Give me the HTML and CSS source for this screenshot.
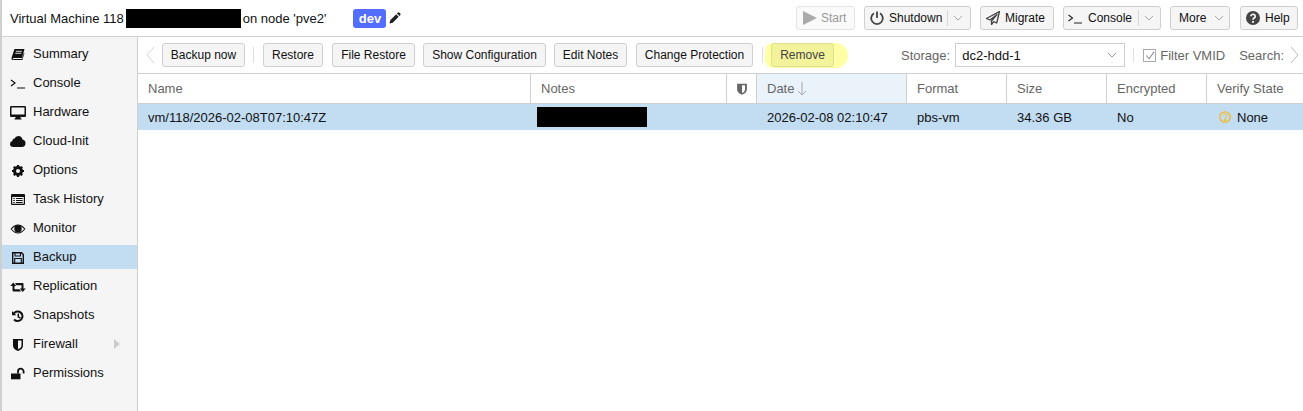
FILE: index.html
```html
<!DOCTYPE html>
<html lang="en">
<head>
<meta charset="utf-8">
<title>Virtual Machine 118</title>
<link rel="stylesheet" href="styles.css">
</head>
<body>
<div class="app">
  <header class="topbar">
    <div class="title">
      <span>Virtual Machine 118</span><span class="redact-title"></span><span>on node 'pve2'</span>
      <span class="tag">dev</span>
      <svg class="pencil" viewBox="0 0 12 12"><path d="M0.5 11.5l0.7-3.2 6-6 2.5 2.5-6 6zM8 1.6l1-1q.6-.5 1.2 0l1.2 1.2q.5.6 0 1.2l-1 1z" fill="#222"/></svg>
    </div>
    <div class="actions">
      <button class="btn disabled w-start"><svg class="bi" viewBox="0 0 14 14"><path d="M0 0l14 7-14 7z" fill="#aaa"/></svg>Start</button>
      <button class="btn w-shut"><svg class="bi" viewBox="0 0 14 14"><path d="M4 2.300a5.800 5.800 0 1 0 6 0M7 .5v6.500" fill="none" stroke="#444" stroke-width="1.800"/></svg>Shutdown<span class="split"></span><svg class="chev" viewBox="0 0 10 6"><path d="M1 1l4 4 4-4" fill="none" stroke="#aaa"/></svg></button>
      <button class="btn w-mig"><svg class="bi" viewBox="0 0 14 14"><path d="M13.500.5L.5 7.500l3.500 1.500L11 3.500 5.500 10v3.500l2.200-2.800 3 1.300z" fill="none" stroke="#444" stroke-width="1.300" stroke-linejoin="round"/></svg>Migrate</button>
      <button class="btn w-con"><svg class="bi" viewBox="0 0 14 14"><path d="M.5 4l4 3-4 3M6 12h8" fill="none" stroke="#222" stroke-width="1.100"/></svg>Console<span class="split split-con"></span><svg class="chev" viewBox="0 0 10 6"><path d="M1 1l4 4 4-4" fill="none" stroke="#aaa"/></svg></button>
      <button class="btn w-more">More<svg class="chev more-chev" viewBox="0 0 10 6"><path d="M1 1l4 4 4-4" fill="none" stroke="#aaa"/></svg></button>
      <button class="btn w-help"><svg class="bi" viewBox="0 0 14 14"><circle cx="7" cy="7" r="7" fill="#444"/><path d="M4.800 5.300a2.200 2 0 1 1 3.400 1.700Q7 7.700 7 8.800" fill="none" stroke="#fff" stroke-width="1.600"/><rect x="6.100" y="10" width="1.800" height="1.800" fill="#fff"/></svg>Help</button>
    </div>
  </header>
  <div class="main">
    <nav class="sidebar">
      <a class="nav"><svg class="ni" viewBox="0 0 16 16"><path d="M4.500 3H14.500L12 12H3.800Q2.600 12 2.900 12.800T3.800 13H12L14 6.500l.4.700-2 6.800H3.200Q1 14 1.600 11.500z" fill="#111"/><path d="M5.800 5.300h6M5.300 7.300h6" stroke="#f5f5f5" stroke-width=".9"/></svg>Summary</a>
      <a class="nav"><svg class="ni" viewBox="0 0 16 16"><path d="M1 5l4 3-4 3M7 13h8" fill="none" stroke="#111" stroke-width="1.200"/></svg>Console</a>
      <a class="nav"><svg class="ni" viewBox="0 0 16 16"><path d="M1.200 2h13.600q1.200 0 1.200 1.200v8.600q0 1.200-1.200 1.200H10.500v1l1 .8v.6h-7v-.6l1-.8v-1H1.200Q0 13 0 11.800V3.200Q0 2 1.200 2zM1.500 3.500v7h13v-7z" fill="#111" fill-rule="evenodd"/></svg>Hardware</a>
      <a class="nav"><svg class="ni" viewBox="0 0 16 16"><path d="M3.500 14Q0 14 0 11 0 8.700 2.300 8 2.200 5.800 4.500 5.500 5.500 3 8.500 3q3.300 0 4 3.500 3 .6 3 3.700 0 3.800-3.700 3.800z" fill="#111"/></svg>Cloud-Init</a>
      <a class="nav"><svg class="ni" viewBox="0 0 16 16"><circle cx="8" cy="9" r="3.700" fill="none" stroke="#111" stroke-width="2.800"/><path d="M8 3v12M2 9h12M3.800 4.800l8.400 8.400M12.200 4.800l-8.400 8.400" stroke="#111" stroke-width="2.200"/><circle cx="8" cy="9" r="2" fill="#f5f5f5"/></svg>Options</a>
      <a class="nav"><svg class="ni" viewBox="0 0 16 16"><path d="M2 3h12q1 0 1 1v9q0 1-1 1H2q-1 0-1-1V4q0-1 1-1zM2.200 6v6.800h11.600V6z" fill="#111" fill-rule="evenodd"/><path d="M3.300 7.500h1.500M3.300 9.500h1.500M3.300 11.500h1.500M6 7.500h6.700M6 9.500h6.700M6 11.500h6.700" stroke="#111"/></svg>Task History</a>
      <a class="nav"><svg class="ni" viewBox="0 0 16 16"><path d="M1.200 9Q4.500 5 8 5t6.800 4Q11.500 13 8 13T1.200 9z" fill="none" stroke="#111" stroke-width="1.100"/><circle cx="8" cy="8.700" r="3.700" fill="#111"/></svg>Monitor</a>
      <a class="nav active"><svg class="ni" viewBox="0 0 16 16"><path d="M3 3.700h8.500L13.300 5.500V14.300H2.700V3.700z" fill="none" stroke="#111" stroke-width="1.400"/><path d="M5 4v3h5.500V4M4.700 14v-4.500h6.600V14" fill="none" stroke="#111" stroke-width="1.100"/></svg>Backup</a>
      <a class="nav"><svg class="ni" viewBox="0 0 16 16"><path d="M.3 8L3.300 4.500l3 3.500H4.500v3.200h5L11 13.500H3.500q-1 0-1-1V8zM15.700 10.500l-3 3.500-3-3.500h1.800V7.300h-5L5 5h7.500q1 0 1 1v4.500z" fill="#111"/></svg>Replication</a>
      <a class="nav"><svg class="ni" viewBox="0 0 16 16"><path d="M3.800 6.500a4.800 4.800 0 1 1 .3 6" fill="none" stroke="#111" stroke-width="2"/><path d="M2 4v4.300h4.300z" fill="#111"/><path d="M8.300 6.500v3.300l2.200 1.300" fill="none" stroke="#111" stroke-width="1.500"/></svg>Snapshots</a>
      <a class="nav nav-fw"><svg class="ni" viewBox="0 0 16 16"><path d="M3 3h10v6.500q0 3.500-5 5.500-5-2-5-5.500zM8 4.500v8.700q3.500-1.500 3.500-3.700v-5z" fill="#111" fill-rule="evenodd"/></svg>Firewall<svg class="expander" viewBox="0 0 6 10"><path d="M0 0l6 5-6 5z" fill="#ccc"/></svg></a>
      <a class="nav"><svg class="ni" viewBox="0 0 16 16"><path d="M1 8.500h9.500v5.800H1z" fill="#111"/><path d="M8 8.500V6.500a2.800 2.800 0 0 1 5.600 0v2" fill="none" stroke="#111" stroke-width="1.800"/></svg>Permissions</a>
    </nav>
    <section class="content">
      <div class="toolbar">
        <svg class="scroll" viewBox="0 0 9 18"><path d="M8 1L1 9l7 8" fill="none" stroke="#d4d4d4"/></svg>
        <button class="btn b1">Backup now</button>
        <span class="sep s1"></span>
        <button class="btn b2">Restore</button>
        <button class="btn b3">File Restore</button>
        <button class="btn b4">Show Configuration</button>
        <button class="btn b5">Edit Notes</button>
        <button class="btn b6">Change Protection</button>
        <span class="sep s2"></span>
        <span class="hilite"><button class="btn btn-remove">Remove</button></span>
        <span class="spacer"></span>
        <label class="lbl">Storage:</label>
        <div class="combo"><span>dc2-hdd-1</span><svg class="chev" viewBox="0 0 10 6"><path d="M1 1l4 4 4-4" fill="none" stroke="#999"/></svg></div>
        <span class="sep s3"></span>
        <span class="check"><svg viewBox="0 0 12 12"><path d="M2.500 6l3 3.500L11 2" fill="none" stroke="#888" stroke-width="1.100"/></svg></span>
        <span class="lbl filter">Filter VMID</span>
        <span class="lbl search">Search:</span>
        <svg class="scroll scroll-r" viewBox="0 0 9 18"><path d="M1 1l7 8-7 8" fill="none" stroke="#bbb"/></svg>
      </div>
      <div class="grid">
        <div class="th">Name</div>
        <div class="th">Notes</div>
        <div class="th th-icon"><svg viewBox="0 0 16 16"><path d="M1.500 1h13v7.500q0 4.500-6.500 7-6.500-2.500-6.500-7zM8 3v10.300q4-1.800 4-4.800V3z" fill="#666" fill-rule="evenodd"/></svg></div>
        <div class="th th-sort">Date<svg class="arrow" viewBox="0 0 10 14"><path d="M5 0v13M1 9l4 4 4-4" fill="none" stroke="#aaa"/></svg></div>
        <div class="th">Format</div>
        <div class="th">Size</div>
        <div class="th">Encrypted</div>
        <div class="th th-last">Verify State</div>
        <div class="td">vm/118/2026-02-08T07:10:47Z</div>
        <div class="td td-notes"><span class="redact-notes"></span></div>
        <div class="td"></div>
        <div class="td">2026-02-08 02:10:47</div>
        <div class="td">pbs-vm</div>
        <div class="td">34.36 GB</div>
        <div class="td">No</div>
        <div class="td td-verify"><svg class="q" viewBox="0 0 12 12"><circle cx="6" cy="6" r="5.200" fill="none" stroke="#f5b81f" stroke-width="1.300"/><path d="M4.300 4.800a1.800 1.600 0 1 1 2.700 1.400q-1 .6-1 1.400M5.400 8.600h1.200v1.200H5.400z" fill="none" stroke="#f5b81f"/></svg>None</div>
      </div>
    </section>
  </div>
</div>
</body>
</html>
```
FILE: styles.css
```css
* { box-sizing: border-box; }
html, body { margin: 0; padding: 0; height: 100%; }
body {
  font-family: "Liberation Sans", Arial, sans-serif;
  font-size: 13px;
  color: #000;
  background: #fff;
  overflow: hidden;
}
.app {
  height: 411px;
  border-left: 2px solid #cfcfcf;
  display: flex;
  flex-direction: column;
}
.topbar {
  height: 37px;
  flex: none;
  display: flex;
  align-items: center;
  border-bottom: 1px solid #cfcfcf;
  padding-left: 8px;
  padding-right: 5px;
}
.title { display: flex; align-items: center; height: 100%; flex: 1; color: #111; }
.redact-title { width: 115px; height: 19px; background: #000; margin: 0 2px; }
.tag {
  width: 33px; height: 19px; margin-left: 27px;
  background: #536dfe; color: #fff; font-weight: 700;
  border-radius: 3px; text-align: center; line-height: 19px;
}
.pencil { width: 12px; height: 12px; margin-left: 3px; }
.actions { display: flex; gap: 9px; }
.btn {
  font: inherit;
  font-size: 12px;
  height: 24px;
  padding: 0;
  display: inline-flex;
  align-items: center;
  justify-content: center;
  background: #f5f5f5;
  border: 1px solid #cfcfcf;
  border-radius: 3px;
  color: #111;
  flex: none;
}
.bi { width: 14px; height: 14px; margin-right: 5px; flex: none; }
.chev { width: 10px; height: 6px; flex: none; }
.split { width: 1px; height: 16px; background: #d8d8d8; margin: 0 5px; }
.split-con { margin: 0 5px 0 6px; }
.more-chev { margin-left: 8px; }
.disabled { background: #fafafa; color: #999; border-color: #e4e4e4; }
.w-start { width: 59px; justify-content: flex-start; padding-left: 6px; }
.w-start .bi { margin-right: 4px; }
.w-shut { width: 107px; justify-content: flex-start; padding-left: 5px; }
.w-mig { width: 74px; justify-content: flex-start; padding-left: 5px; }
.w-con { width: 98px; justify-content: flex-start; padding-left: 4px; }
.w-con .bi { margin-right: 6px; }
.w-more { width: 60px; justify-content: flex-start; padding-left: 8px; }
.w-help { width: 58px; margin-left: 1px; justify-content: flex-start; padding-left: 5px; }
.main { flex: 1; display: flex; min-height: 0; }
.sidebar {
  width: 136px; flex: none;
  background: #f5f5f5;
  border-right: 1px solid #cfcfcf;
  padding-top: 5px;
  display: flex; flex-direction: column; gap: 5px;
}
.nav { height: 24px; padding-bottom: 1px; display: flex; align-items: center; color: #111; padding-left: 8px; }
.nav.active { background: #c2ddf2; }
.ni { width: 16px; height: 16px; margin-right: 7px; flex: none; }
.expander { width: 6px; height: 10px; margin-left: 36px; }
.content { flex: 1; min-width: 0; display: flex; flex-direction: column; }
.toolbar {
  height: 37px; flex: none;
  display: flex; align-items: center;
  border-bottom: 1px solid #cfcfcf;
  padding-left: 8px;
}
.scroll { width: 9px; height: 18px; flex: none; }
.b1 { width: 83px; margin-left: 7px; }
.sep { width: 1px; height: 16px; background: #e0e0e0; flex: none; }
.s1 { margin: 0 9px 0 8px; }
.b2 { width: 60px; }
.b3 { width: 83px; margin-left: 9px; }
.b4 { width: 123px; margin-left: 8px; }
.b5 { width: 73px; margin-left: 8px; }
.b6 { width: 117px; margin-left: 9px; }
.s2 { margin-left: 9px; margin-right: 2px; }
.hilite {
  display: flex; align-items: flex-start;
  width: 83px; height: 25px; margin-top: 1px; padding-left: 6px;
  background: #ffffa6;
  border-radius: 8px 12px 12px 8px;
}
.btn-remove { width: 63px; background: #f3f39b; border-color: #e0e08c; color: #444; }
.spacer { flex: 1; }
.lbl { color: #666; }
.combo {
  width: 170px; height: 24px; margin-left: 5px;
  border: 1px solid #cfcfcf;
  display: flex; align-items: center; justify-content: space-between;
  padding: 0 7px 0 6px; color: #111;
}
.s3 { margin-left: 8px; margin-right: 9px; height: 14px; }
.check { width: 13px; height: 13px; border: 1px solid #aaa; display: flex; flex: none; }
.check svg { width: 100%; height: 100%; }
.filter { margin-left: 4px; }
.search { margin-left: 14px; }
.scroll-r { margin-left: 6px; margin-right: 4px; }
.grid {
  display: grid;
  grid-template-columns: 393px 196px 30px 150px 100px 100px 100px 1fr;
  grid-template-rows: 30px 26px;
}
.th {
  display: flex; align-items: center;
  padding-left: 10px; color: #666;
  border-right: 1px solid #cfcfcf;
  border-bottom: 1px solid #cfcfcf;
}
.th-last { border-right: 0; }
.th-icon { padding-left: 9px; }
.th-icon svg { width: 12px; height: 12px; }
.th-sort { background: #ebf3fa; }
.arrow { width: 10px; height: 14px; margin-left: 3px; }
.td { background: #c2ddf2; display: flex; align-items: center; padding-left: 10px; color: #111; }
.td-notes { padding-left: 6px; }
.redact-notes { width: 110px; height: 20px; background: #000; }
.td-verify { padding-left: 12px; }
.q { width: 12px; height: 12px; margin-right: 6px; }
```
